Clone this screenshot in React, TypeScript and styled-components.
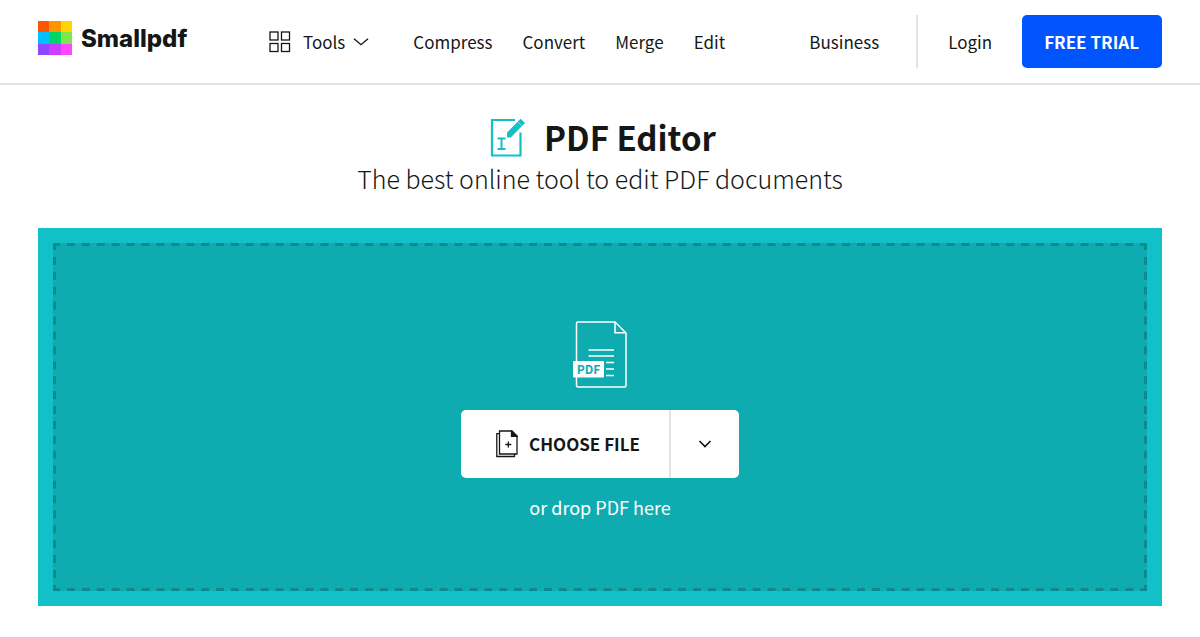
import React from "react";
import styled, { createGlobalStyle } from "styled-components";

const ink = "#151717";
const teal = "#11c1c7";
const tealDark = "#0eacb1";
const dash = "#0b8b90";
const line = "#e3e3e3";

const GlobalStyle = createGlobalStyle`
  *, *::before, *::after { box-sizing: border-box; }
  body {
    margin: 0;
    background: #fff;
    color: ${ink};
    font-family: "Noto Sans CJK SC", "Noto Sans", sans-serif;
    font-size: 17px;
    line-height: 24px;
  }
  button { font: inherit; color: inherit; border: 0; background: none; padding: 0; cursor: pointer; }
  a { color: inherit; text-decoration: none; }
  svg { display: block; flex: none; }
`;

const Header = styled.header`
  display: flex;
  align-items: center;
  padding: 15px 38px;
  border-bottom: 2px solid ${line};
`;

const Brand = styled.a`
  display: flex;
  align-items: flex-start;
  gap: 9px;
  width: 150px;
  margin-right: 81px;
  padding-bottom: 5px;
`;

const Wordmark = styled.span`
  font-family: Inter, "Open Sans", sans-serif;
  font-size: 24px;
  font-weight: 800;
  line-height: 36px;
`;

const ToolsButton = styled.button`
  display: flex;
  align-items: center;
  margin-right: 44px;
`;

const ToolsLabel = styled.span`
  margin: 0 8px 0 12px;
`;

const Nav = styled.nav`
  display: flex;
  gap: 30px;
`;

const Account = styled.div`
  display: flex;
  align-items: center;
  margin-left: auto;
`;

const Divider = styled.span`
  width: 2px;
  height: 53px;
  margin: 0 30px 0 37px;
  background: ${line};
`;

const TrialButton = styled.button`
  height: 53px;
  margin-left: 30px;
  padding: 0 23px 0 22px;
  border-radius: 5px;
  background: #0055ff;
  color: #fff;
  font-weight: 700;
`;

const Main = styled.main`
  padding: 28px 38px;
`;

const Intro = styled.div`
  display: flex;
  flex-direction: column;
  align-items: center;
  margin-bottom: 34px;
`;

const Heading = styled.div`
  display: flex;
  align-items: center;
  gap: 19px;
  padding-left: 6px;
`;

const Title = styled.h1`
  margin: 0;
  font-size: 33px;
  font-weight: 700;
  line-height: 49px;
`;

const Subtitle = styled.p`
  margin: 0;
  font-size: 25px;
  font-weight: 300;
  line-height: 32px;
`;

const DropPanel = styled.section`
  padding: 15px;
  background: ${teal};
`;

const dashX = `linear-gradient(90deg, transparent 4px, ${dash} 4px 12px, transparent 12px)`;
const dashY = `linear-gradient(180deg, transparent 4px, ${dash} 4px 12px, transparent 12px)`;

/* The transparent border lets the rounded dash tiles run on into the corners. */
const DropArea = styled.div`
  display: flex;
  flex-direction: column;
  align-items: center;
  padding: 68px 10px 62px;
  border: 10px solid transparent;
  background-color: ${tealDark};
  background-image: ${dashX}, ${dashX}, ${dashY}, ${dashY};
  background-size: 15px 3px, 15px 3px, 3px 15px, 3px 15px;
  background-position: 0 -10px, 0 calc(100% + 10px), -10px 0, calc(100% + 10px) 0;
  background-repeat: round no-repeat, round no-repeat, no-repeat round, no-repeat round;
  background-clip: border-box;
`;

const FilePicker = styled.div`
  display: flex;
  margin: 22px 0 17px;
  height: 68px;
  border-radius: 5px;
  background: #fff;
  overflow: hidden;
`;

const ChooseButton = styled.button`
  display: flex;
  align-items: center;
  gap: 11px;
  padding: 0 29px 0 35px;
  font-weight: 700;
`;

const SourceButton = styled.button`
  display: flex;
  align-items: center;
  justify-content: center;
  width: 70px;
  border-left: 2px solid ${line};
`;

const DropHint = styled.p`
  margin: 0;
  color: #fff;
  font-size: 18px;
`;

const logoColors = [
  "#ff5500", "#ff9500", "#ffd400",
  "#00beff", "#00d665", "#80e650",
  "#8f47ff", "#cc3dff", "#ff47ff",
];

const LogoMark = () => (
  <svg width="34" height="34" viewBox="0 0 3 3" shapeRendering="crispEdges" aria-hidden="true">
    {logoColors.map((fill, i) => (
      <rect key={fill} x={i % 3} y={Math.floor(i / 3)} width="1" height="1" fill={fill} />
    ))}
  </svg>
);

const GridIcon = () => (
  <svg width="22" height="22" viewBox="0 0 22 22" fill="none" stroke={ink} strokeWidth="1.3" aria-hidden="true">
    <rect x="1" y="1" width="8" height="8" />
    <rect x="12.5" y="1" width="8" height="8" />
    <rect x="1" y="12.5" width="8" height="8" />
    <rect x="12.5" y="12.5" width="8" height="8" />
  </svg>
);

const WideChevron = () => (
  <svg width="16" height="8" viewBox="0 0 16 8" fill="none" stroke={ink} strokeWidth="1.4" aria-hidden="true">
    <path d="M1 0.7 8 6.7 15 0.7" />
  </svg>
);

const EditorIcon = () => (
  <svg width="35" height="39" viewBox="0 0 35 39" fill="none" stroke={teal} strokeWidth="2.2" aria-hidden="true">
    <path d="M25 2H2V37.500H30.500V14.500" />
    <path d="M7.500 20.500h8M7.500 31h8M11.500 20.500v10.500" strokeWidth="2" />
    <path d="M17 19.500v-5L30.600 .7 35 5 20.800 19.500Z" fill={teal} stroke="none" />
    <path d="M27.200 3.200 32.400 8.400" stroke="#fff" strokeWidth="0.4" />
  </svg>
);

const PdfIcon = () => (
  <svg width="54" height="67" viewBox="0 0 54 67" fill="none" stroke="#fff" strokeWidth="1.5" aria-hidden="true">
    <path d="M3.500 40V2.500q0-1.500 1.500-1.500H42L53 12V64.500q0 1.500-1.500 1.500H5q-1.500 0-1.500-1.500V56" />
    <path d="M42 1V11.700H53" />
    <path d="M15.500 29H41M15.500 35H41M33 41.500H41M33 48H41M33 54.500H41" />
    <rect x="0" y="40" width="31" height="16.500" rx="1" fill="#fff" stroke="none" />
    <text
      x="15.500"
      y="52.500"
      textAnchor="middle"
      fill={tealDark}
      stroke="none"
      fontFamily="Noto Sans CJK SC, sans-serif"
      fontSize="12"
      fontWeight="700"
    >
      PDF
    </text>
  </svg>
);

const AddFileIcon = () => (
  <svg width="22" height="28" viewBox="0 0 22 28" fill="none" stroke={ink} strokeWidth="1.300" aria-hidden="true">
    <path d="M3.500 1H16L21 6V24H3.500Z" />
    <path d="M3.500 3.700H.8V26.500H18.500V24" />
    <path d="M15.500 1V6.300H21Z" fill={ink} />
    <path d="M12.300 11.500v6M9.300 14.500h6" />
  </svg>
);

const SmallChevron = () => (
  <svg width="14" height="8" viewBox="0 0 14 8" fill="none" stroke={ink} strokeWidth="1.700" aria-hidden="true">
    <path d="M1.500 1 7 6.500 12.500 1" />
  </svg>
);

export default function App() {
  return (
    <>
      <GlobalStyle />
      <Header>
        <Brand href="#">
          <LogoMark />
          <Wordmark>Smallpdf</Wordmark>
        </Brand>
        <ToolsButton type="button">
          <GridIcon />
          <ToolsLabel>Tools</ToolsLabel>
          <WideChevron />
        </ToolsButton>
        <Nav>
          <a href="#compress">Compress</a>
          <a href="#convert">Convert</a>
          <a href="#merge">Merge</a>
          <a href="#edit">Edit</a>
        </Nav>
        <Account>
          <a href="#business">Business</a>
          <Divider />
          <a href="#login">Login</a>
          <TrialButton type="button">FREE TRIAL</TrialButton>
        </Account>
      </Header>
      <Main>
        <Intro>
          <Heading>
            <EditorIcon />
            <Title>PDF Editor</Title>
          </Heading>
          <Subtitle>The best online tool to edit PDF documents</Subtitle>
        </Intro>
        <DropPanel>
          <DropArea>
            <PdfIcon />
            <FilePicker>
              <ChooseButton type="button">
                <AddFileIcon />
                CHOOSE FILE
              </ChooseButton>
              <SourceButton type="button" aria-label="More sources">
                <SmallChevron />
              </SourceButton>
            </FilePicker>
            <DropHint>or drop PDF here</DropHint>
          </DropArea>
        </DropPanel>
      </Main>
    </>
  );
}
